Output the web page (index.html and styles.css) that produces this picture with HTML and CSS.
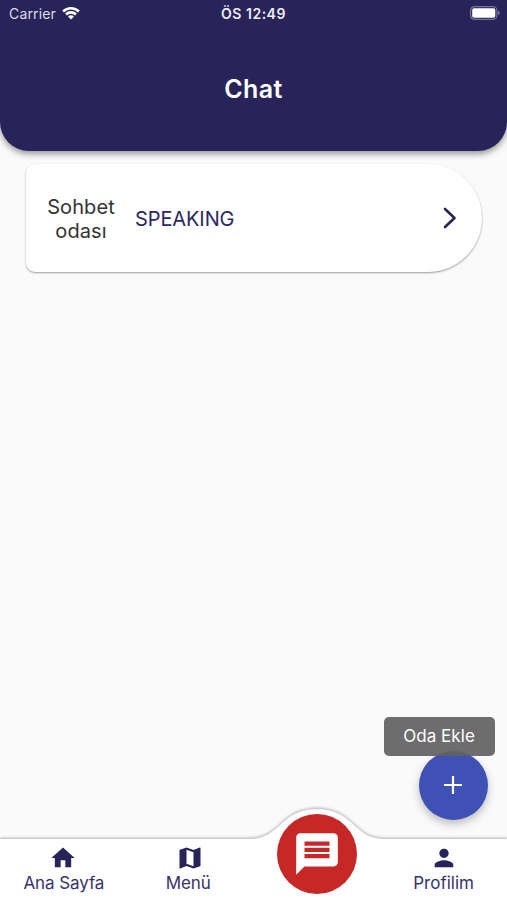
FILE: index.html
```html
<!DOCTYPE html>
<html lang="tr">
<head>
<meta charset="utf-8">
<meta name="viewport" content="width=device-width, initial-scale=1">
<title>Chat</title>
<link rel="stylesheet" href="styles.css">
</head>
<body>
<div class="screen">
  <header class="header">
    <div class="status">
      <div class="carrier"><span>Carrier</span>
        <svg class="wifi" viewBox="0 0 18 14"><path d="M0.2 4.500a12.600 12.600 0 0 1 17.600 0l-1.800 1.900a10 10 0 0 0-14 0zM3.100 7.500a8.400 8.400 0 0 1 11.800 0l-1.900 1.900a5.700 5.700 0 0 0-8 0zM6 10.400a4.200 4.200 0 0 1 6 0L9 13.500z"/></svg>
      </div>
      <div class="clock">ÖS 12:49</div>
      <div class="power">
        <svg class="battery" viewBox="0 0 30 14"><rect x=".6" y=".6" width="26.3" height="12.8" rx="3.8"/><path class="charge" d="M4 2.2h19.500a1.800 1.800 0 0 1 1.800 1.800v6a1.800 1.800 0 0 1-1.800 1.800H4A1.800 1.800 0 0 1 2.200 10V4A1.800 1.800 0 0 1 4 2.200z"/><path class="tip" d="M28 4.800q1.800.6 1.800 2.200T28 9.200z"/></svg>
      </div>
    </div>
    <h1 class="title">Chat</h1>
  </header>
  <main class="content">
    <a class="room">
      <span class="room-label">Sohbet odası</span>
      <span class="room-name">SPEAKING</span>
      <svg class="chevron" viewBox="0 0 14 22"><path d="M2 2l9.500 9L2 20"/></svg>
    </a>
  </main>
  <button class="fab" aria-label="Oda Ekle"><svg viewBox="0 0 20 20"><path d="M10 1v18M1 10h18"/></svg></button>
  <div class="tooltip">Oda Ekle</div>
  <nav class="nav">
    <svg class="nav-shape" viewBox="0 0 507 100"><path d="M-10 39H250C263 39 271 33 279 26C291 14 302 9 317 9S343 14 355 26C363 33 371 39 384 39H517V110H-10z"/></svg>
    <a class="tab"><svg class="icon" viewBox="0 0 24 24"><path d="M10 20v-6h4v6h5v-8h3L12 3 2 12h3v8z"/></svg><span class="tab-home">Ana Sayfa</span></a>
    <a class="tab"><svg class="icon" viewBox="0 0 24 24"><path d="M20.500 3l-.16.03L15 5.100 9 3 3.360 4.900c-.21.07-.36.25-.36.48V20.500c0 .28.22.5.5.5l.16-.03L9 18.900l6 2.100 5.640-1.900c.21-.07.36-.25.36-.48V3.500c0-.28-.22-.5-.5-.5zM15 19l-6-2.110V5l6 2.110V19z"/></svg><span class="tab-menu">Menü</span></a>
    <a class="tab active" aria-label="Chat"><span class="bubble"><svg viewBox="0 0 24 24"><path d="M20 2H4c-1.100 0-1.990.9-1.990 2L2 22l4-4h14c1.100 0 2-.9 2-2V4c0-1.100-.9-2-2-2zM6 9h12v2H6V9zm12 5H6v-2h12v2zm0-6H6V6h12v2z"/></svg></span></a>
    <a class="tab"><svg class="icon" viewBox="0 0 24 24"><path d="M12 12c2.210 0 4-1.790 4-4s-1.790-4-4-4-4 1.790-4 4 1.790 4 4 4zm0 2c-2.670 0-8 1.340-8 4v2h16v-2c0-2.660-5.330-4-8-4z"/></svg><span class="tab-profile">Profilim</span></a>
  </nav>
</div>
</body>
</html>
```

FILE: styles.css
```css
* { box-sizing: border-box; }
body { margin: 0; font-family: Inter, "Liberation Sans", sans-serif; background: #fafafa; }
svg { display: block; }
.screen { position: relative; width: 507px; height: 900px; overflow: hidden; display: flex; flex-direction: column; background: #fafafa; }
.header { height: 151px; background: #282359; border-radius: 0 0 29px 29px; color: #fff; box-shadow: 0 3px 6px rgba(0,0,0,.4); }
.status { display: grid; grid-template-columns: 1fr auto 1fr; align-items: center; height: 27px; padding: 0 7px 0 9px; }
.carrier { display: flex; align-items: center; gap: 6px; font-size: 14px; letter-spacing: .16px; color: #dedde9; }
.wifi { width: 18px; height: 14px; fill: #fff; margin-top: -1px; }
.clock { margin-right: 2px; font-size: 14px; font-weight: 600; letter-spacing: .5px; color: #eeedf5; }
.power { display: flex; justify-content: flex-end; }
.battery { width: 30px; height: 14px; margin-top: -1px; fill: none; stroke: #77739a; stroke-width: 1.2; }
.battery .charge { fill: #fff; stroke: none; }
.battery .tip { fill: #77739a; stroke: none; }
.title { margin: 47px 0 0; text-align: center; font-size: 25px; line-height: 31px; font-weight: 600; letter-spacing: .4px; }
.content { flex: 1; padding: 13px 25px 0 26px; }
.room { display: flex; align-items: center; height: 108px; padding: 0 25px 0 15px; background: #fff; border-radius: 9px 54px 54px 9px; box-shadow: 0 1px 2px rgba(0,0,0,.38); }
.room-label { width: 80px; padding-top: 1px; text-align: center; font-size: 20px; line-height: 24px; letter-spacing: .1px; color: #333; }
.room-name { margin-left: 14px; padding-top: 1px; flex: 1; font-size: 20px; line-height: 24px; letter-spacing: -.1px; color: #2c2761; }
.chevron { width: 14px; height: 22px; fill: none; stroke: #282359; stroke-width: 2.6; stroke-linecap: round; stroke-linejoin: round; }
.fab { position: absolute; left: 418.500px; top: 750.500px; width: 69px; height: 69px; border: 0; padding: 0; border-radius: 50%; background: #3f51b5; display: grid; place-items: center; box-shadow: 0 4px 8px rgba(0,0,0,.25); }
.fab svg { width: 20px; height: 20px; fill: none; stroke: #fff; stroke-width: 2.2; }
.tooltip { position: absolute; left: 383.500px; top: 717px; width: 111px; height: 39px; border-radius: 5px; background: rgba(97,97,97,.92); color: #fff; font-size: 17px; line-height: 39px; text-align: center; letter-spacing: .05px; }
.nav { position: relative; height: 62px; display: grid; grid-template-columns: repeat(4, 1fr); }
.nav-shape { position: absolute; left: 0; bottom: 0; width: 507px; height: 100px; fill: #fff; filter: drop-shadow(0 -1px 1.5px rgba(0,0,0,.3)); }
.tab { position: relative; display: flex; flex-direction: column; align-items: center; padding-top: 6px; font-size: 17px; line-height: 23px; color: #37336a; }
.icon { width: 28px; height: 28px; fill: #282359; }
.tab-home { letter-spacing: -.1px; padding-left: 1px; }
.tab-menu { letter-spacing: -.1px; padding-right: 4px; }
.bubble { width: 80px; height: 80px; margin-top: -30px; flex: none; display: grid; place-items: center; border-radius: 50%; background: #c62828; }
.bubble svg { width: 50px; height: 50px; fill: #fff; }
```
